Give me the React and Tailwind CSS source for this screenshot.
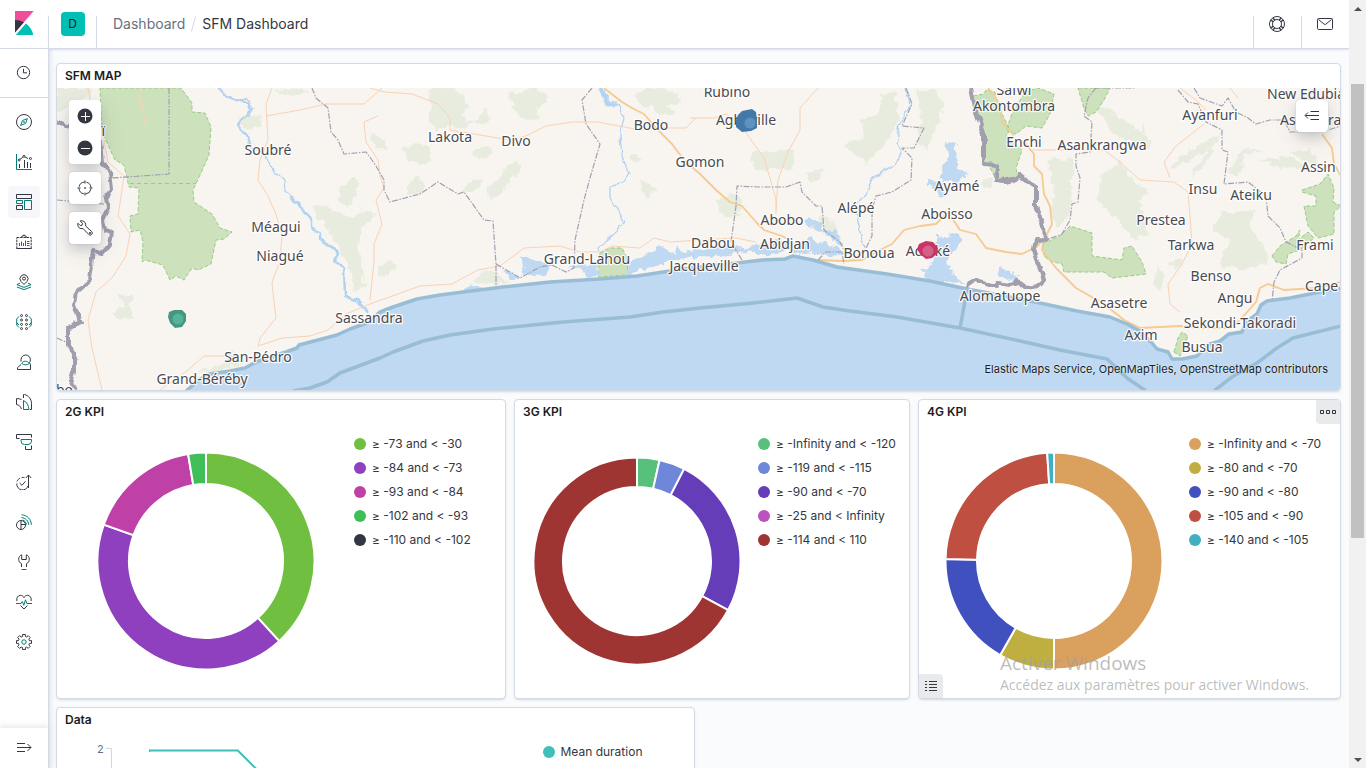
import React from "react";

const INK = "#343741";
const TEAL = "#017d73";

/* ---------- icons ---------- */

function Icon({ children }) {
  return (
    <svg viewBox="0 0 16 16" className="size-4" fill="none" stroke={INK} strokeWidth="1" aria-hidden="true">
      {children}
    </svg>
  );
}

const navItems = [
  {
    name: "Discover",
    icon: (
      <>
        <circle cx="8" cy="8" r="7.5" />
        <path stroke={TEAL} d="M11.4 4.6 9.5 9.5 4.6 11.4 6.5 6.5z" />
        <circle cx="8" cy="8" r=".5" stroke={TEAL} />
      </>
    ),
  },
  {
    name: "Visualize",
    icon: (
      <>
        <path stroke={TEAL} d="M.5 0v15.500H16" />
        <path d="M3.500 10v4M8.500 6v8M11.500 8v6M14.500 9v5" />
        <path d="m4 5.400 3-2.500M9 3l3 1.500M13 4.500h1" />
        <circle cx="3.200" cy="6" r="1" />
        <circle cx="8" cy="2.300" r="1" />
        <circle cx="14.500" cy="4.500" r="1" />
      </>
    ),
  },
  {
    name: "Dashboard",
    active: true,
    icon: (
      <>
        <path d="M.5.5h15v4H.5z" />
        <path stroke={TEAL} d="M.5 6.500h6v3h-6zM8.500 6.500h7v9h-7z" />
        <path d="M.5 11.500h6v4h-6z" />
      </>
    ),
  },
  {
    name: "Canvas",
    icon: (
      <>
        <path strokeDasharray="2.500 .8" d="M.8 3.500h14.400v11H.8z" />
        <path d="M5.500 3.500 6 2h1.200L8 .8 8.800 2H10l.5 1.500M.5 14.500h15" />
        <path stroke={TEAL} d="M3.500 9v3M5.500 7.500V12M7.500 9v3M9.500 6.500V12M11 7.500h2.500M11 9.500h2.500M11 11.500h2.500" />
      </>
    ),
  },
  {
    name: "Maps",
    icon: (
      <>
        <path d="M8 10.500 5.200 7.600a4 4 0 1 1 5.600 0z" />
        <circle cx="8" cy="4.600" r="1.500" />
        <path stroke={TEAL} d="M4 9.200.9 10.600 8 13.400l7.100-2.800L12 9.200M.9 13 8 15.600l7.100-2.600" />
      </>
    ),
  },
  {
    name: "Machine Learning",
    icon: (
      <>
        <circle cx="5.500" cy="1.600" r="1" />
        <circle cx="10.500" cy="1.600" r="1" />
        <circle cx="5.500" cy="6" r="1" />
        <circle cx="10.500" cy="6" r="1" />
        <circle cx="5.500" cy="10.400" r="1" />
        <circle cx="10.500" cy="10.400" r="1" />
        <circle cx="5.500" cy="14.600" r="1" />
        <circle cx="10.500" cy="14.600" r="1" />
        <path stroke={TEAL} d="M2.800 2.500.7 5v6l2.300 2.500M13.200 2.500 15.300 5v6L13 13.500M.7 8.500l2 2.500M15.300 8.500l-2 2.500" />
      </>
    ),
  },
  {
    name: "Metrics",
    icon: (
      <>
        <path d="M5 7.500V5.800a4.700 4.800 0 0 1 9.400 0c0 1-.3 2-.9 2.700l1 2.300v4.700h-13v-1.800L5 10.500" />
        <path stroke={TEAL} d="M5.800 9.500C6.500 6.500 12 6.500 13.300 9.500c-1.800 1.800-5.500 1.800-7.500 0z" />
      </>
    ),
  },
  {
    name: "Logs",
    icon: (
      <>
        <path d="M5.500 5.500C4 4.800 2.500 4.600.5 4.600v6c2.500.2 4 1.700 5 4.400" />
        <path d="M7.500 4V.5h1c4 1 7 4.500 7 9v6H14" />
        <path stroke={TEAL} d="M7.500 15.500v-9c3.500 1.500 5 5 5.500 9z" />
      </>
    ),
  },
  {
    name: "APM",
    icon: (
      <>
        <path d="M3.500 4.500h-3v-4h15v3M9.500 12v3.500h6v-4" />
        <path stroke={TEAL} d="M5 5.500h10.500v1.500a3.500 3.500 0 0 1-3.500 3.500H8.500A3.500 3.500 0 0 1 5 7z" />
      </>
    ),
  },
  {
    name: "Uptime",
    icon: (
      <>
        <path d="M12.500 14V1.500M9.800 4l2.700-3 2.700 3M.8 9.500a5.800 5.800 0 0 0 11.400 2" />
        <path d="M3.500 9 6 11.300l3.500-4" />
        <path stroke={TEAL} d="M.8 7.500A5.800 5.800 0 0 1 4 4.200M5.500 3.600a6 6 0 0 1 3 0" />
      </>
    ),
  },
  {
    name: "SIEM",
    icon: (
      <>
        <circle cx="5" cy="11" r="4.500" />
        <path d="M5 6.500v9M5 10.500h4.500" />
        <path stroke={TEAL} d="M5.500.8c5.500.2 9.700 4.500 9.900 10M5.500 3.600c4 .2 7 3.300 7.200 7.200M6.500 6c2.200.6 3.500 2.200 4 4.500" />
      </>
    ),
  },
  {
    name: "Dev Tools",
    icon: (
      <>
        <path d="M5.500 13V9.700C3.500 8.800 2.700 7 2.700 5.200 2.700 3.200 4 1.400 5.700.8v4.700h4.600V.8c1.700.6 3 2.400 3 4.400 0 1.800-.8 3.600-2.800 4.500V13" />
        <path stroke={TEAL} d="M5.500 15.500h5" />
      </>
    ),
  },
  {
    name: "Stack Monitoring",
    icon: (
      <>
        <path d="M.9 7C.2 4 1.800 1.500 4.300 1.300 6 1.200 7.300 2.200 8 3.600c.7-1.400 2-2.400 3.700-2.300C14.200 1.500 15.800 4 15.100 7M4.500 11.500 8 15l3.500-3.500" />
        <path stroke={TEAL} d="M0 9.500h5l1.300-2 1.500 3.800 1.700-5.500 1.300 3.700H16" />
      </>
    ),
  },
  {
    name: "Management",
    icon: (
      <>
        <path d="M6.600.5h2.800v2l1.300.5 1.500-1.400 2 2-1.400 1.500.6 1.500h2.100v2.800h-2.100l-.6 1.500 1.400 1.500-2 2-1.500-1.400-1.300.6v2H6.600v-2l-1.500-.6-1.500 1.400-2-2 1.400-1.500-.5-1.500h-2V6.600h2l.5-1.500-1.400-1.500 2-2L5.100 3l1.500-.5z" />
        <circle cx="8" cy="8" r="2.200" stroke={TEAL} />
      </>
    ),
  },
];

/* ---------- map data ---------- */

const SEA_SHORE =
  "M186 391 L200 379 210 374 230 371 245 368 256 362 267 358 286 352 297 348 299 345 318 340 337 335 350 329 367 323 380 312 393 307 417 299 440 295 463 292 503 287 550 282 600 279 637 276 670 271 700 267 737 263 762 260 785 259 793 256 813 260 837 267 887 274 930 281 967 289 983 292 1005 296 1040 303 1077 311 1110 317 1127 324 1140 331 1147 338 1152 343 1157 349 1168 352 1172 359 1182 359 1197 356 1207 345 1220 341 1229 334 1242 332 1246 322 1257 314 1261 305 1267 301 1290 298 1315 293 1341 288";

const woods = [
  "M57 88 92 88 92 96 80 100 72 108 57 112z",
  "M428 88 450 88 462 94 470 108 460 116 474 122 488 108 492 118 484 126 472 124 462 130 446 124 438 132 428 118 432 108z",
  "M508 92 522 94 530 88 546 94 548 104 534 108 540 118 524 120 512 106z",
  "M402 150 414 144 432 148 430 160 420 166 408 158z",
  "M408 184 418 176 424 184 424 192 408 196z",
  "M474 150 486 146 494 152 484 160 472 156z",
  "M486 188 498 180 504 168 516 160 522 166 514 176 506 186 500 196 488 198z",
  "M462 192 474 178 484 182 474 192z",
  "M636 92 656 88 678 94 680 102 666 106 676 116 660 114 650 106 640 104z",
  "M638 180 650 184 656 190 648 194 646 198z",
  "M628 158 636 153 642 160 634 162z",
  "M238 118 246 113 262 116 260 126 250 130 242 126z",
  "M274 90 300 88 308 92 298 96 282 95z",
  "M312 205 330 207 350 218 364 210 376 214 370 222 362 226 358 250 366 288 352 292 350 270 334 240z",
  "M338 190 352 178 360 184 350 206 340 202z",
  "M118 294 134 295 130 304 134 320 118 318 110 314 124 306z",
  "M196 372 222 364 232 350 252 360 210 374z",
  "M474 282 484 270 500 274 510 284z",
  "M378 266 392 260 396 266 384 278 378 276z",
  "M370 134 384 140 388 150 376 148z",
  "M880 95 896 92 898 120 888 140 880 150 866 164 862 158 848 150 846 142 864 138 862 120 880 112z",
  "M916 90 936 90 944 106 936 128 928 150 916 142 922 120z",
  "M752 152 794 150 794 170 752 170z",
  "M714 200 738 194 744 208 730 214z",
  "M808 174 822 168 820 180 808 180z",
  "M982 182 992 176 994 184 986 188z",
  "M1048 160 1076 158 1072 178 1070 216 1056 228 1050 210 1054 190z",
  "M1100 176 1122 162 1130 178 1148 192 1140 200 1148 234 1134 240 1120 222 1098 202z",
  "M1096 110 1104 106 1154 142 1146 148 1128 140 1116 136z",
  "M1128 138 1146 126 1140 140z",
  "M1168 172 1178 158 1208 140 1220 134 1204 168 1190 176 1210 148z",
  "M1228 170 1244 148 1264 152 1244 154 1240 176z",
  "M1212 230 1222 212 1254 212 1250 226 1266 250 1270 262 1246 270 1220 264 1230 240z",
  "M1158 266 1164 276 1160 290 1154 286z",
  "M1168 262 1184 258 1176 270z",
  "M1258 160 1290 156 1310 166 1286 170z",
  "M1290 152 1326 172 1310 150z",
  "M818 214 836 222 838 232 826 234z",
  "M716 200 730 206 742 214 724 218z",
];

const parks = [
  "M100 88 181 88 192 103 192 112 205 113 211 127 209 155 200 175 193 190 194 202 212 214 220 228 232 232 224 239 216 240 211 264 198 270 192 268 184 280 176 276 170 280 163 265 145 260 142 262 143 242 140 230 131 232 130 216 138 214 139 188 129 187 124 165 115 160 108 145 102 132z",
  "M600 253 610 248 622 248 627 258 628 275 598 277z",
  "M973 96 984 94 986 90 995 92 996 98 1000 110 1010 130 1006 136 1022 150 1016 168 1018 178 1006 178 997 181 988 164 984 162 984 134z",
  "M1025 92 1038 88 1054 94 1050 114 1042 128 1026 126 1016 134 1006 130 1012 114z",
  "M1078 88 1110 88 1104 100 1096 112 1088 116 1084 108z",
  "M1042 244 1060 236 1070 226 1086 231 1092 233 1092 256 1122 260 1124 248 1132 246 1142 262 1146 274 1112 278 1104 272 1064 272 1062 264 1050 261 1044 256z",
  "M1302 190 1320 184 1328 174 1334 188 1333 202 1341 206 1334 212 1334 234 1318 238 1308 226 1304 206 1316 206 1316 196 1302 192z",
  "M1272 256 1280 246 1296 236 1300 230 1298 240 1308 232 1314 238 1300 250 1288 254 1286 264 1276 262z",
  "M1174 352 1178 338 1182 332 1188 336 1184 346 1180 356z",
];

const lagoons = [
  "M520 256 524 268 520 274 534 276 545 275 552 266 540 260 533 260z",
  "M504 270 512 272 520 280 510 280z M462 289 470 285 474 287 482 287 478 292 464 292z",
  "M566 266 590 264 598 266 599 276 588 277 584 270z",
  "M628 262 642 258 656 250 654 246 662 244 664 248 674 254 676 244 682 252 696 250 720 247 740 244 742 248 756 244 768 248 776 240 788 244 790 240 798 246 810 236 818 242 830 244 840 250 846 254 830 256 812 252 800 256 790 248 776 254 758 256 748 250 720 257 700 256 680 260 664 264 640 270 632 276 626 274z",
  "M803 220 812 218 820 222 822 230 832 232 836 228 838 236 842 246 830 238 820 232 806 224z",
  "M947 142 956 144 954 152 958 160 958 168 970 174 962 178 956 184 944 180 942 188 944 198 936 196 938 190 928 186 928 180 940 184 942 172 944 164 948 160z",
  "M936 236 948 236 956 232 962 238 960 246 950 254 948 268 954 274 960 280 966 284 950 282 936 282 924 278 926 270 930 264 936 254z",
  "M920 268 936 270 940 276 926 274z",
  "M998 268 1004 270 1014 272 1018 278 1008 282 1000 276z",
  "M600 90 608 108 616 106 614 102z",
];

const wideRivers =
  "M219 88 226 96 240 101 250 104 252 110 246 116 240 120 238 126 243 132 248 136 251 146M290 198 298 202 304 212 312 220 312 228 320 234 320 240 330 246 338 254 336 262 344 268 345 296 356 300 368 312M600 88 606 104 618 106";

const thinRivers =
  "M251 146 268 158 276 172 284 180 285 192 298 202M240 101 248 98 254 108 248 118M618 106 624 118 620 134 622 156 629 174 622 184 610 186 610 198 618 210 624 224 606 240 598 252M906 88 910 104 900 126 896 144 902 152 894 164 872 180 866 194 856 204 858 222 864 248";

const minorRoads = [
  "M140 88 146 130 M138 96 142 106 M88 88 90 100",
  "M104 140 108 162 124 176 122 190 118 216 130 234 126 256 112 278 96 292 88 320 92 348 102 390",
  "M272 88 266 104 268 140 260 160 258 180 268 196 276 214 282 236 280 262 274 276 272 284 276 318 260 338 258 346",
  "M266 116 300 110 326 104 364 104 382 88 M378 116 364 122 366 142 378 160 380 176 384 188 376 200 382 224 374 244 374 262 370 300",
  "M160 390 188 370 204 356 240 356 M258 346 282 338 310 336 328 330 346 314 370 304 420 286 452 284 478 270 500 266 524 248 560 246 580 252 600 252 612 246 640 248 654 238 670 242 700 240 736 238 756 242",
  "M370 88 384 92 412 94 438 104 450 118 450 130 486 136 510 140 526 136 546 126 572 122 598 122 640 130 664 128",
  "M664 128 686 128 696 118 M690 118 714 118 726 114 740 124 754 144 764 158 770 178 776 200 776 214 M818 88 800 108 800 130 788 152 778 180 776 210",
  "M1032 150 1050 150 1080 150 1104 150 1120 162 1140 180 1174 182 1188 192 1190 216 1192 244 1182 264 1168 284 1170 304 1180 312",
  "M1170 178 1164 162 1176 146 1204 124 M1180 88 1196 100 1206 110 M1230 88 1238 98",
];

const majorRoads = [
  "M604 88 622 102 632 108 644 114 656 128 672 144 684 160 700 174 716 190 730 202 742 206 756 222 764 230 782 236 790 240 796 252",
  "M818 260 842 261 862 260 876 252 892 244 904 230 920 226 936 224 948 212 960 230 976 234 986 248 1006 252 1022 254 1038 246 1042 240",
  "M988 88 1000 104 1002 122 1014 136 M1024 142 1034 154 1034 166 1042 174 1044 194 1050 206 1052 224 1044 240 1042 250 1056 268 1076 288 1104 304 1124 320 1140 328 1180 326 1200 328 1230 328 1240 320 1256 302 1260 288 1268 284 1284 290 1316 288 1341 282",
  "M1322 134 1332 148 1334 164 1341 176 M1306 92 1312 100",
];

const regionBorders = [
  "M169 88 169 174 112 178",
  "M57 200 104 204 M57 338 70 344 78 360",
  "M312 88 316 98 328 108 331 132 338 140 344 154 366 152 372 160 376 166 384 180 384 190 390 202 420 194 438 182 458 194 464 192 484 220 493 221 496 264 496 285 M496 264 520 278 540 267 552 265 566 272 574 268 575 240 584 200 590 178 600 144 586 124 582 100 592 88",
  "M742 260 731 242 736 206 737 186 760 187 786 187 800 182 802 192 816 206 822 206 824 230 840 242 844 250 M818 260 826 252 842 252 844 264",
  "M906 88 912 104 902 126 924 128 914 148 902 148 912 158 911 180 892 192 876 196 872 210 872 236 864 252",
  "M1096 88 1088 98 1084 116 1092 122 1090 152 1076 154 1076 166 1080 178 1078 202 1072 204 1070 220 1062 234 1046 240",
  "M1094 88 1136 88 M1178 90 1188 102 1198 104 1206 122 1222 130 1222 150 1228 152 1224 184 1248 182 1266 196 1268 216 1280 228 1286 242 1302 250 1302 258 1280 270 1274 282 1272 302",
  "M1194 88 1200 98 1222 106 1228 98 1236 112 1248 118 1256 124 1270 120 1284 120 1290 132 1300 132 1316 126 1328 130 1341 126",
];

const countryBorders = [
  "M57 122 66 126 74 124 90 130 100 140 102 164 110 172 112 190 106 198 108 208 102 220 104 230 112 232 110 244 102 254 94 252 92 264 90 280 76 292 74 304 80 322 68 328 68 346 74 352 74 374 71 382 76 390",
  "M971 88 976 112 984 134 984 164 997 165 996 180 1004 181 1016 178 1018 174 1028 182 1036 186 1036 206 1044 228 1045 240 1036 238 1034 250 1040 268 1044 280 1038 286 1026 288 1018 282 1010 284 998 282 996 286 976 280 968 284 967 290",
];

const labels = [
  ["Rubino", 727, 92], ["Agboville", 746, 120], ["Bodo", 651, 125], ["Lakota", 450, 137],
  ["Divo", 516, 141], ["Soubré", 268, 150], ["Gomon", 700, 162], ["Méagui", 276, 227],
  ["Niagué", 280, 256], ["Sassandra", 369, 318], ["San-Pédro", 258, 357], ["Grand-Béréby", 202, 379],
  ["Grand-Lahou", 587, 259], ["Dabou", 713, 243], ["Jacqueville", 704, 266], ["Abobo", 782, 220],
  ["Abidjan", 785, 244], ["Alépé", 856, 208], ["Bonoua", 869, 253], ["Adiaké", 928, 251],
  ["Aboisso", 947, 214], ["Ayamé", 957, 186], ["Safwi", 1014, 90], ["Akontombra", 1014, 106],
  ["Enchi", 1024, 142], ["Asankrangwa", 1102, 145], ["Ayanfuri", 1210, 115], ["Insu", 1203, 189],
  ["Ateiku", 1251, 195], ["Prestea", 1161, 220], ["Tarkwa", 1191, 245], ["Benso", 1211, 276],
  ["Angu", 1235, 298], ["Asasetre", 1119, 303], ["Axim", 1141, 335], ["Sekondi-Takoradi", 1240, 323],
  ["Busua", 1202, 347], ["Alomatuope", 1000, 296], ["Frami", 1315, 245],
  ["New Edubiase", 1267, 94, "start"], ["Asankoras", 1280, 120, "start"], ["Assin Foso", 1301, 167, "start"],
  ["Cape Coast", 1305, 286, "start"], ["Taï", 105, 131, "end"], ["Pleebo", 73, 390, "end"],
];

function MapCanvas() {
  return (
    <svg
      viewBox="57 88 1283 302"
      preserveAspectRatio="xMidYMid slice"
      className="absolute inset-0 h-full w-full"
      fill="none"
      strokeLinejoin="round"
      role="img"
      aria-label="SFM map"
    >
      <defs>
        <filter id="rugged" filterUnits="userSpaceOnUse" x="50" y="80" width="1300" height="320" colorInterpolationFilters="sRGB">
          <feTurbulence type="fractalNoise" baseFrequency="0.14" numOctaves="3" seed="4" />
          <feDisplacementMap in="SourceGraphic" scale="9" xChannelSelector="R" yChannelSelector="G" />
        </filter>
        <filter id="winding" filterUnits="userSpaceOnUse" x="50" y="80" width="1300" height="320" colorInterpolationFilters="sRGB">
          <feTurbulence type="fractalNoise" baseFrequency="0.09" numOctaves="2" seed="9" />
          <feDisplacementMap in="SourceGraphic" scale="7" xChannelSelector="R" yChannelSelector="G" />
        </filter>
      </defs>
      <path fill="#f8f4f0" d="M0 0h1400v500H0z" />
      <path fill="#e7ecde" filter="url(#rugged)" d={woods.join(" ")} />
      <path fill="#cce1bc" stroke="#98cc85" strokeDasharray="4 2" d={parks.join(" ")} />
      <path stroke="#98cc85" strokeDasharray="4 3" d="M130 183.500H196" />
      <path fill="#bfd9f2" filter="url(#rugged)" d={lagoons.join(" ")} />
      <path fill="#bfd9f2" d={SEA_SHORE + " L1341 391z"} />
      <g stroke="#b0d2f3" filter="url(#winding)">
        <path strokeWidth="2.500" d={wideRivers} />
        <path strokeWidth="1.300" d={thinRivers} />
      </g>
      <path stroke="#f8d2b5" d={minorRoads.join(" ")} />
      <path stroke="#f6ca90" strokeWidth="1.800" d={majorRoads.join(" ")} />
      <path stroke="#a3a0b0" strokeWidth="1.200" strokeDasharray="6 1.500 1.500 1.500" d={regionBorders.join(" ")} />
      <path stroke="#a19eae" strokeWidth="4" filter="url(#winding)" d={countryBorders.join(" ")} />
      <g stroke="#99bdd5" strokeWidth="3.500">
        <path d={SEA_SHORE} />
        <path d="M293 391 L310 388 327 382 340 373 380 358 393 352 423 341 450 335 493 329 563 322 630 317 663 312 700 308 753 303 797 298 823 307 850 311 897 317 960 328 1020 341 1060 350 1107 359 1127 378 1146 391M960 328 967 290M1214 391 1232 377 1257 363 1277 348 1293 338 1341 326" />
      </g>
      <g
        fill="#4a4a4f"
        stroke="#ffffff"
        strokeWidth="2.500"
        strokeOpacity=".85"
        paintOrder="stroke"
        className="font-['Noto_Sans',sans-serif] text-[14px]"
      >
        {labels.map(([name, x, y, anchor]) => (
          <text key={name} x={x} y={y + 5} textAnchor={anchor || "middle"}>
            {name}
          </text>
        ))}
      </g>
      <g>
        <path fill="#459680" d="M169 312 174 310 182 310 186 314 186 321 182 327 175 328 170 323 168 317z" />
        <circle cx="178" cy="319" r="5.500" fill="#54b399" />
        <path fill="#4379aa" d="M738 115 742 111 747 110 752 109 756 112 757 120 757 128 751 131 742 132 736 127 736 120z" />
        <circle cx="750" cy="123" r="5.500" fill="#6092c0" />
        <path fill="#c93467" d="M919 244 926 241 933 242 938 248 937 254 932 258 926 259 920 254 917 249z" />
        <circle cx="928" cy="251" r="5.500" fill="#d36086" />
      </g>
    </svg>
  );
}

function MapButton({ label, children }) {
  return (
    <button
      type="button"
      aria-label={label}
      className="flex size-8 items-center justify-center rounded bg-white shadow-[0_6px_12px_-1px_rgba(65,78,101,0.2),0_6px_24px_rgba(65,78,101,0.12),0_0_2px_rgba(65,78,101,0.2)]"
    >
      {children}
    </button>
  );
}

/* ---------- panels ---------- */

function Panel({ title, className = "", children }) {
  return (
    <section
      className={
        "relative flex min-w-0 flex-col overflow-hidden rounded border border-[#d3dae6] bg-white shadow-[0_2px_2px_-1px_rgba(152,162,179,0.3),0_1px_5px_-2px_rgba(152,162,179,0.3)] " +
        className
      }
    >
      <h2 className="h-6 px-2 text-[12px] font-semibold leading-6 text-[#1a1c21]">{title}</h2>
      {children}
    </section>
  );
}

function Legend({ items }) {
  return (
    <ul className="w-[151px] shrink-0 pt-2">
      {items.map(([color, text]) => (
        <li key={text} className="h-6">
          <button type="button" className="flex h-6 items-center gap-1.5 whitespace-nowrap text-[12px] text-[#343741]">
            <span className="size-3 rounded-full" style={{ backgroundColor: color }} />
            {text}
          </button>
        </li>
      ))}
    </ul>
  );
}

function Donut({ radius, hole, slices, label }) {
  const point = (deg, r) => {
    const a = ((deg - 90) * Math.PI) / 180;
    return `${(r * Math.cos(a)).toFixed(2)} ${(r * Math.sin(a)).toFixed(2)}`;
  };
  let start = 0;
  return (
    <svg
      viewBox="-109 -109 218 218"
      className="size-[218px] shrink-0"
      stroke="#ffffff"
      strokeWidth="2"
      role="img"
      aria-label={label}
    >
      {slices.map(([color, , end]) => {
        if (end <= start) return null;
        const big = end - start > 180 ? 1 : 0;
        const d = `M${point(start, radius)}A${radius} ${radius} 0 ${big} 1 ${point(end, radius)}L${point(end, hole)}A${hole} ${hole} 0 ${big} 0 ${point(start, hole)}z`;
        start = end;
        return <path key={color} d={d} fill={color} />;
      })}
    </svg>
  );
}

const kpis = [
  {
    title: "2G KPI",
    radius: 108.5,
    hole: 77,
    slices: [
      ["#70bf40", "≥ -73 and < -30", 137.6],
      ["#8e40bf", "≥ -84 and < -73", 289.6],
      ["#bf40a7", "≥ -93 and < -84", 350.5],
      ["#40bf58", "≥ -102 and < -93", 360],
      ["#343741", "≥ -110 and < -102", 360],
    ],
  },
  {
    title: "3G KPI",
    radius: 103.5,
    hole: 74,
    slices: [
      ["#57c17b", "≥ -Infinity and < -120", 12.6],
      ["#6f87d8", "≥ -119 and < -115", 27.1],
      ["#663db8", "≥ -90 and < -70", 118.3],
      ["#bc52bc", "≥ -25 and < Infinity", 118.3],
      ["#9e3533", "≥ -114 and < 110", 360],
    ],
  },
  {
    title: "4G KPI",
    radius: 108.5,
    hole: 77,
    selected: true,
    slices: [
      ["#daa05d", "≥ -Infinity and < -70", 180],
      ["#bfaf40", "≥ -80 and < -70", 209.8],
      ["#4050bf", "≥ -90 and < -80", 271],
      ["#bf4f40", "≥ -105 and < -90", 356.4],
      ["#40afbf", "≥ -140 and < -105", 360],
    ],
  },
];

function KpiPanel({ kpi }) {
  return (
    <Panel title={kpi.title} className="h-[300px]">
      <div className="flex min-h-0 flex-1">
        <div className="flex min-w-0 flex-1 items-center justify-center">
          <Donut {...kpi} label={kpi.title} />
        </div>
        <Legend items={kpi.slices} />
      </div>
      {kpi.selected && (
        <>
          <button
            type="button"
            aria-label="Panel options"
            className="absolute right-0 top-0 flex size-6 items-center justify-center rounded-bl bg-[#e9eaec]"
          >
            <Icon>
              <path d="M.5 6.500h3v3h-3zM6.500 6.500h3v3h-3zM12.500 6.500h3v3h-3z" />
            </Icon>
          </button>
          <button
            type="button"
            aria-label="Toggle legend"
            className="absolute bottom-0 left-0 flex size-6 items-center justify-center rounded-tr bg-[#e9eaec]"
          >
            <Icon>
              <path d="M2 3.500h2M2 6.500h2M2 9.500h2M2 12.500h2M6 3.500h8M6 6.500h8M6 9.500h8M6 12.500h8" />
            </Icon>
          </button>
        </>
      )}
    </Panel>
  );
}

/* ---------- chrome ---------- */

function Header() {
  return (
    <header className="flex h-[49px] shrink-0 items-end border-b border-[#d3dae6] bg-white shadow-[0_2px_2px_-1px_rgba(152,162,179,0.3)]">
      <div className="flex h-8 w-[49px] justify-center border-x border-[#d3dae6]">
        <button
          type="button"
          aria-label="Space: Default"
          className="-mt-1 size-6 rounded bg-[#00bfb3] text-[12px] leading-6 text-[#1a1c21]"
        >
          D
        </button>
      </div>
      <nav aria-label="Breadcrumbs" className="flex h-8 flex-1 items-start gap-2 pl-4 text-[14px] leading-4">
        <a href="#dashboards" className="text-[#69707d]">Dashboard</a>
        <span className="h-4 w-px rotate-[15deg] bg-[#d3dae6]" aria-hidden="true" />
        <span className="text-[#343741]">SFM Dashboard</span>
      </nav>
      <button type="button" aria-label="Help" className="flex h-8 w-12 justify-center border-l border-[#d3dae6] pr-px">
        <Icon>
          <circle cx="8" cy="8" r="7.500" />
          <circle cx="8" cy="8" r="4.500" />
          <path strokeWidth="1.400" d="M4 2.200 6 4.200M2.200 4 4.200 6M12 2.200l-2 2M13.800 4l-2 2M4 13.800l2-2M2.200 12l2-2M12 13.800l-2-2M13.800 12l-2-2" />
        </Icon>
      </button>
      <button type="button" aria-label="News" className="flex h-8 w-12 justify-center border-l border-[#d3dae6] pr-px">
        <Icon>
          <rect x=".5" y="2.500" width="15" height="11" rx="1" />
          <path d="m1.500 3.500 5.700 4.700a1.300 1.300 0 0 0 1.600 0l5.700-4.700" />
        </Icon>
      </button>
    </header>
  );
}

function SideNav() {
  return (
    <aside className="flex w-12 shrink-0 flex-col bg-white">
      <a
        href="#home"
        aria-label="Home"
        className="flex h-[49px] shrink-0 items-start justify-center border-b border-[#d3dae6] pt-[11px]"
      >
        <svg viewBox="0 0 32 32" className="size-6" aria-hidden="true">
          <path fill="#f04e98" d="M4 0v28.789L28.935.017z" />
          <path fill="#343741" d="M4 12v16.789l11.906-13.738A24.721 24.721 0 0 0 4 12" />
          <path fill="#00bfb3" d="M18.479 16.664 6.268 30.754l-1.073 1.237h23.191c-1.252-6.292-4.883-11.719-9.908-15.327" />
        </svg>
      </a>
      <a href="#recent" aria-label="Recently viewed" className="flex h-[49px] shrink-0 items-center justify-center border-b border-[#d3dae6]">
        <Icon>
          <circle cx="7.500" cy="7.500" r="6.200" />
          <path d="M7.500 3.800v4h3.500" />
        </Icon>
      </a>
      <nav aria-label="Applications" className="flex min-h-0 flex-1 flex-col items-center gap-2 pt-2">
        {navItems.map((item) => (
          <a
            key={item.name}
            href={"#" + item.name.toLowerCase().replace(/ /g, "-")}
            aria-label={item.name}
            aria-current={item.active ? "page" : undefined}
            className={
              "flex size-8 shrink-0 items-center justify-center rounded " + (item.active ? "bg-[#f5f7fa]" : "")
            }
          >
            <Icon>{item.icon}</Icon>
          </a>
        ))}
      </nav>
      <button
        type="button"
        aria-label="Expand navigation"
        className="flex h-10 shrink-0 items-center justify-center bg-white shadow-[0_-2px_6px_rgba(152,162,179,0.25)]"
      >
        <Icon>
          <path d="M1 3.500h8M1 7.500h14M1 11.500h8M11.500 4l3.500 3.500-3.500 3.500" />
        </Icon>
      </button>
    </aside>
  );
}

function ScrollRail() {
  return (
    <div className="flex w-[17px] shrink-0 flex-col items-center bg-[#f1f1f1]" aria-hidden="true">
      <span className="flex h-[17px] items-center">
        <svg viewBox="0 0 8 4" className="h-1 w-2" fill="#505050"><path d="M0 4 4 0l4 4z" /></svg>
      </span>
      <span className="grow-[67]" />
      <span className="w-[13px] grow-[454] bg-[#c1c1c1]" />
      <span className="grow-[213]" />
      <span className="flex h-[17px] items-center">
        <svg viewBox="0 0 8 4" className="h-1 w-2" fill="#505050"><path d="M0 0l4 4 4-4z" /></svg>
      </span>
    </div>
  );
}

export default function App() {
  return (
    <div className="relative flex h-screen overflow-hidden bg-[#fafbfd] font-['Inter','Liberation_Sans',sans-serif] text-[#343741]">
      <SideNav />
      <div className="flex min-w-0 flex-1 flex-col">
        <Header />
        <main className="flex min-h-0 flex-1 flex-col gap-2 overflow-hidden border-l border-[#d3dae6] pl-[7px] pr-2 pt-[14px] shadow-[inset_5px_0_4px_-3px_rgba(152,162,179,0.25)]">
          <Panel title="SFM MAP" className="shrink-0">
            <div className="relative h-[302px] overflow-hidden">
              <MapCanvas />
              <div className="absolute left-3 top-3 flex flex-col gap-2">
                <div className="rounded bg-white shadow-[0_6px_12px_-1px_rgba(65,78,101,0.2),0_6px_24px_rgba(65,78,101,0.12)]">
                  <button type="button" aria-label="Zoom in" className="flex size-8 items-center justify-center">
                    <Icon>
                      <circle cx="8" cy="8" r="7.500" fill={INK} stroke="none" />
                      <path stroke="#fff" d="M4 8.500h9M8.500 4v9" />
                    </Icon>
                  </button>
                  <button type="button" aria-label="Zoom out" className="flex size-8 items-center justify-center">
                    <Icon>
                      <circle cx="8" cy="8" r="7.500" fill={INK} stroke="none" />
                      <path stroke="#fff" d="M4 8.500h9" />
                    </Icon>
                  </button>
                </div>
                <MapButton label="Fit to data">
                  <Icon>
                    <circle cx="8" cy="8" r="6" strokeDasharray="7.400 2" strokeDashoffset="-1" />
                    <path d="M8 .5v3M8 12.500v3M.5 8h3M12.500 8h3" />
                    <circle cx="8" cy="8" r=".5" />
                  </Icon>
                </MapButton>
                <MapButton label="Tools">
                  <Icon>
                    <path d="M5.200.8a4.200 4.200 0 0 0-2 .1l2.300 2.400-.4 1.900-1.900.4L.9 3.300C.2 6 2 8.800 5 8.700l1-.2 5.800 6a2 2 0 0 0 2.900-2.900L8.600 6C9.300 3.500 7.700 1.200 5.200.8z" />
                    <circle cx="13" cy="13" r=".7" />
                  </Icon>
                </MapButton>
              </div>
              <div className="absolute right-3 top-3">
                <MapButton label="Show layers">
                  <Icon>
                    <path d="M6.500 3.500H15M1.500 7.500H15M6.500 11.500H15M4 4.500l-3 3 3 3" />
                  </Icon>
                </MapButton>
              </div>
              <p className="absolute bottom-3 right-3 text-[11px] leading-[18px] text-[#1a1c21] [text-shadow:0_0_2px_rgba(255,255,255,0.8)]">
                <a href="#ems">Elastic Maps Service</a>, <a href="#omt">OpenMapTiles</a>,{" "}
                <a href="#osm">OpenStreetMap contributors</a>
              </p>
            </div>
          </Panel>
          <div className="grid shrink-0 grid-cols-[450fr_396fr_423fr] gap-2">
            {kpis.map((kpi) => (
              <KpiPanel key={kpi.title} kpi={kpi} />
            ))}
          </div>
          <div className="grid shrink-0 grid-cols-2 gap-2">
            <Panel title="Data" className="h-[300px]">
              <div className="flex flex-1">
                <div className="min-w-0 flex-1">
                  <svg viewBox="57 732 486 270" className="h-[270px] w-full" preserveAspectRatio="xMinYMin meet" fill="none">
                    <path stroke="#d3d5da" d="M106 748.500h5.500V1000" />
                    <path stroke="#40bfb8" strokeWidth="2" d="M149 750.500h89l46 46" />
                    <circle cx="150" cy="751" r="1" fill="#40bfb8" />
                    <text x="97" y="753" fill="#69707d" className="text-[11px]">2</text>
                  </svg>
                </div>
                <Legend items={[["#40bfb8", "Mean duration"]]} />
              </div>
            </Panel>
          </div>
        </main>
      </div>
      <ScrollRail />
      <div className="pointer-events-none absolute bottom-[75px] right-[53px] w-[313px] whitespace-nowrap font-['Open_Sans',sans-serif] text-[#a0a0a0]/70">
        <p className="text-[19px] leading-7">Activer Windows</p>
        <p className="text-[14px] leading-4">Accédez aux paramètres pour activer Windows.</p>
      </div>
    </div>
  );
}
